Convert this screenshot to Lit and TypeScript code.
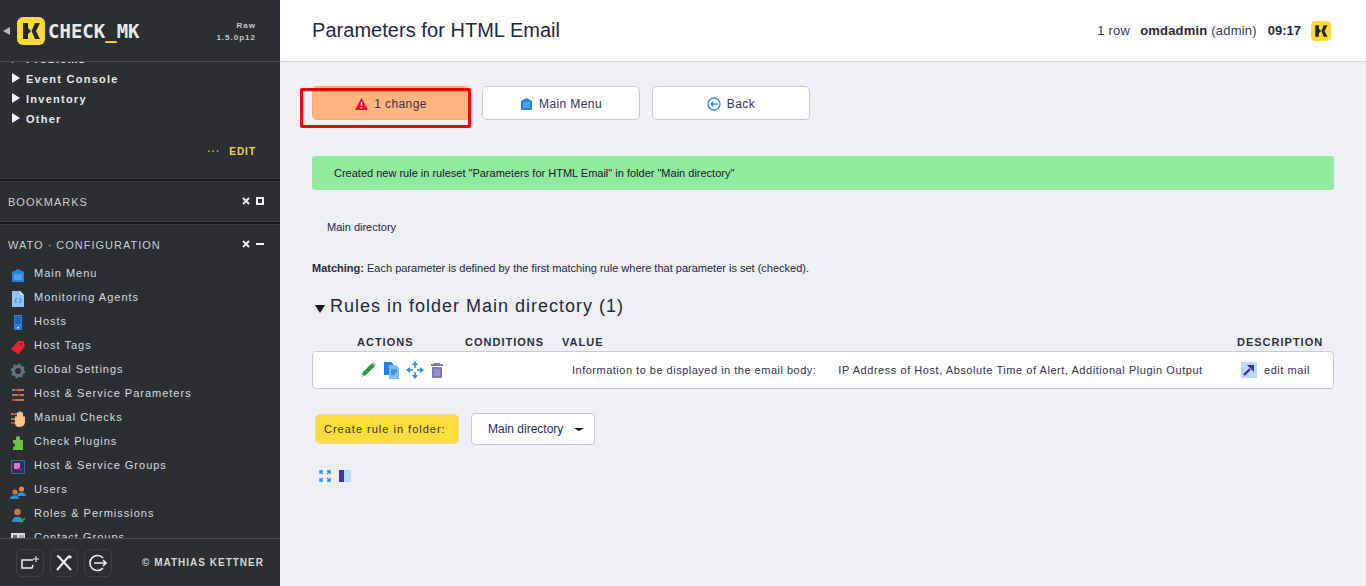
import { LitElement, html, css, svg } from "lit";
import { customElement } from "lit/decorators.js";

const logo = (size: number) => html`<svg width=${size} height=${size} viewBox="0 0 28 28">
  <rect width="28" height="28" rx="6" fill="#ffd93b"></rect>
  <path d="M6 6h5v5l3 3-3 3v5H6zM23 6h-5l-3.500 8 3.500 8h5l-4-8z" fill="#23272a"></path>
</svg>`;

const homeIcon = html`<svg width="13" height="13" viewBox="0 0 13 13">
  <path d="M1 4 6.500 1 12 4v8a1 1 0 0 1-1 1H2a1 1 0 0 1-1-1z" fill="#2083e8"></path>
  <path d="M3 6h7M3 8h7M3 10h7" stroke="#9cc9f5" stroke-width=".8"></path>
</svg>`;

const navIcons: Record<string, unknown> = {
  menu: svg`<path d="M2 5 8 2l6 3v9a1 1 0 0 1-1 1H3a1 1 0 0 1-1-1z" fill="#2083e8"/><path d="M4 8h8M4 10h8M4 12h8" stroke="#9cc9f5" stroke-width=".8"/>`,
  agents: svg`<path d="M2 0h8l4 4v12H2z" fill="#8fc4f4"/><path d="M10 0v4h4z" fill="#d8ebfb"/><path d="M6.500 7 5 9.500 6.500 12M9.500 7 11 9.500 9.500 12" stroke="#2083e8" fill="none"/>`,
  hosts: svg`<rect x="4" y="0" width="8" height="15" fill="#2083e8"/><path d="M5 2h6M5 4h6M5 6h6M5 8h6" stroke="#1a4a78"/><rect x="7" y="12" width="2" height="1.500" fill="#cfe6fb"/>`,
  tags: svg`<path d="M8 2h5a1 1 0 0 1 1 1l1 4-6 8a1 1 0 0 1-1 0L2 11a1 1 0 0 1 0-2z" fill="#e8232e"/><circle cx="11" cy="5" r="1" fill="#a5121c"/>`,
  settings: svg`<circle cx="8" cy="8" r="4.600" fill="none" stroke="#5b7583" stroke-width="3.200"/><circle cx="8" cy="8" r="6.600" fill="none" stroke="#5b7583" stroke-width="1.600" stroke-dasharray="2.400 2.800"/>`,
  params: svg`<path d="M2 3h12M2 8h12M2 13h12" stroke="#d9d9d9" stroke-width="1.200"/><path d="M7 3h7M10 8h4M5 13h9" stroke="#ef6a2e" stroke-width="1.200"/><circle cx="6" cy="3" r="1.200" fill="#e8232e"/><circle cx="9" cy="8" r="1.200" fill="#e8232e"/><circle cx="4" cy="13" r="1.200" fill="#e8232e"/>`,
  manual: svg`<path d="M1 3h6M1 8h5M1 12h5" stroke="#d9d9d9" stroke-width="1.200"/><circle cx="4" cy="3" r="1.200" fill="#e8232e"/><circle cx="3" cy="12" r="1.200" fill="#e8232e"/><path d="M5 6c0-1 2-1 2 0V2c0-1 2-1 2 0V1c0-1 2-1 2 0v1c0-1 2-1 2 0v4c0-1 2-1 2 0v5a5 5 0 0 1-5 5H9a4 4 0 0 1-4-4z" fill="#f6c48c"/>`,
  plugins: svg`<path d="M3 5h3V3a2 2 0 0 1 4 0v2h3v10H3v-3a2 2 0 0 0 0-4z" fill="#6cc04a"/>`,
  groups: svg`<rect x="1.500" y="1.500" width="13" height="13" fill="#2f3540" stroke="#2a6cb0"/><rect x="4" y="4" width="6" height="6" fill="#d27bd2"/><path d="M7 11l3-3 3 3z" fill="#a0169e"/>`,
  users: svg`<circle cx="5" cy="9" r="2.600" fill="#c77b36"/><path d="M0 16c0-5 9-5 9 0z" fill="#2b8fe8"/><circle cx="11.500" cy="6" r="2.600" fill="#e08c3e"/><path d="M7 13c0-5 9-5 9 0z" fill="#2b8fe8"/>`,
  roles: svg`<circle cx="7.500" cy="5" r="3.300" fill="#c77b36"/><path d="M2 15c0-7 11-7 11 0z" fill="#2b8fe8"/><path d="m9 13 2 2 4-4" stroke="#37a83a" stroke-width="1.600" fill="none"/>`,
  contacts: svg`<rect x="1" y="2" width="14" height="11" fill="#d9d9d9"/><rect x="3" y="4" width="4" height="4" fill="#666"/><path d="M9 5h5M9 7h5" stroke="#777"/>`,
};

const nav: [string, string][] = [
  ["menu", "Main Menu"],
  ["agents", "Monitoring Agents"],
  ["hosts", "Hosts"],
  ["tags", "Host Tags"],
  ["settings", "Global Settings"],
  ["params", "Host & Service Parameters"],
  ["manual", "Manual Checks"],
  ["plugins", "Check Plugins"],
  ["groups", "Host & Service Groups"],
  ["users", "Users"],
  ["roles", "Roles & Permissions"],
  ["contacts", "Contact Groups"],
];

@customElement("app-root")
export class AppRoot extends LitElement {
  static styles = css`
    :host {
      display: flex;
      height: 586px;
      overflow: hidden;
      font-family: "Liberation Sans", Arial, sans-serif;
      background: #eff0f3;
      color: #2e2e4a;
      position: relative;
    }
    .sidebar {
      width: 280px;
      flex: none;
      display: flex;
      flex-direction: column;
      background: #2b2f31;
      color: #dfe4e8;
    }
    .brand {
      flex: none;
      border-bottom: 1px solid #4a4e50;
      display: flex;
      align-items: center;
      box-sizing: border-box;
      padding: 0 0 0 3px;
      height: 62px;
    }
    .collapse {
      width: 0;
      height: 0;
      border: 4px solid transparent;
      border-left: 0;
      border-right: 7px solid #b9bcbe;
      margin-right: 7px;
    }
    .wordmark {
      font-family: "DejaVu Sans Mono", monospace;
      font-weight: 700;
      font-size: 19px;
      color: #e8eaea;
      margin-left: 3px;
    }
    .wordmark span {
      color: #ffd93b;
    }
    .version {
      margin-left: auto;
      margin-right: 24px;
      margin-top: 2px;
      text-align: right;
      font-size: 8px;
      line-height: 12px;
      font-weight: 700;
      letter-spacing: 1px;
      color: #c4c9cc;
    }
    .scroll {
      flex: 1;
      overflow: hidden;
      min-height: 0;
    }
    .tree {
      height: 88px;
      box-sizing: border-box;
      margin-top: -13px;
    }
    .tree-row {
      height: 20px;
      display: flex;
      align-items: center;
      padding-left: 12px;
      font-size: 11px;
      font-weight: 700;
      letter-spacing: 1.25px;
      color: #e6ebef;
    }
    .tree-row i {
      width: 0;
      height: 0;
      border: 5px solid transparent;
      border-right: 0;
      border-left: 8px solid #f4f4f4;
      margin: -3px 6px 0 0;
    }
    .edit-row {
      height: 28px;
      margin-bottom: 13px;
      display: flex;
      justify-content: flex-end;
      align-items: center;
      gap: 9px;
      padding-right: 24px;
      font-size: 10px;
      font-weight: 700;
      letter-spacing: 1px;
      color: #f5d93c;
    }
    .edit-row b {
      color: #d9a83a;
      letter-spacing: 1px;
    }
    .divider {
      height: 2px;
      background: #161819;
      border-top: 1px solid #3a3e40;
      border-bottom: 1px solid #3a3e40;
    }
    .snap-head {
      display: flex;
      align-items: center;
      justify-content: space-between;
      padding: 0 16px 0 8px;
      font-size: 11px;
      letter-spacing: 1px;
      color: #c9ced2;
    }
    .bookmarks {
      height: 39px;
    }
    .wato-head {
      height: 40px;
      margin-bottom: -4px;
    }
    .snap-tools {
      display: flex;
      align-items: center;
      gap: 6px;
      margin-top: -2px;
    }
    .nav-row {
      height: 24px;
      display: flex;
      align-items: center;
      padding-left: 10px;
      font-size: 11px;
      letter-spacing: 1px;
      color: #d7dce0;
    }
    .nav-row svg {
      margin: 3px 8px 0 0;
      flex: none;
    }
    .nav-row span {
      margin-top: -1px;
    }
    .foot {
      height: 48px;
      flex: none;
      border-top: 1px solid #4a4e50;
      display: flex;
      align-items: center;
      padding: 0 16px;
      gap: 6px;
      box-sizing: border-box;
    }
    .foot-btn {
      width: 28px;
      height: 28px;
      border: 1px solid #3d4143;
      border-radius: 6px;
      box-sizing: border-box;
      display: flex;
      align-items: center;
      justify-content: center;
    }
    .copy {
      margin-left: auto;
      font-size: 10px;
      font-weight: 700;
      letter-spacing: 1px;
      color: #d4d8db;
    }
    .main {
      flex: 1;
      min-width: 0;
      display: flex;
      flex-direction: column;
    }
    .top {
      height: 62px;
      box-sizing: border-box;
      background: #fff;
      border-bottom: 1px solid #d5d7dc;
      display: flex;
      align-items: center;
      padding: 0 35px 0 32px;
    }
    h1 {
      font-size: 20px;
      font-weight: 400;
      margin: 0;
      letter-spacing: 0.04px;
      color: #26263f;
    }
    .status {
      margin-left: auto;
      display: flex;
      align-items: center;
      font-size: 13px;
      letter-spacing: 0.2px;
      color: #3a3a5c;
    }
    .status b {
      color: #26263f;
    }
    .status .user {
      margin-left: 10px;
    }
    .status .time {
      margin: 0 10px 0 11px;
      letter-spacing: 0;
    }
    .content {
      padding: 24px 32px 0;
      font-size: 11px;
    }
    .buttons {
      display: flex;
      gap: 12px;
    }
    .btn {
      width: 158px;
      height: 34px;
      padding-top: 1px;
      box-sizing: border-box;
      background: #fff;
      border: 1px solid #c9cbdb;
      border-radius: 5px;
      display: flex;
      align-items: center;
      justify-content: center;
      gap: 6px;
      font-size: 12px;
      letter-spacing: 0.4px;
      color: #33334f;
    }
    .btn.warn {
      background: #ffb57d;
      border-color: #f7ab72;
    }
    .notice {
      margin-top: 36px;
      height: 34px;
      background: #90eb9e;
      border-radius: 3px;
      display: flex;
      align-items: center;
      padding-left: 22px;
      color: #16162a;
    }
    .crumb {
      margin: 30px 0 0 15px;
      line-height: 14px;
      color: #26263f;
    }
    .matching {
      margin-top: 27px;
      line-height: 14px;
      color: #26263f;
    }
    h2 {
      margin: 19px 0 0;
      font-size: 18px;
      line-height: 24px;
      font-weight: 400;
      letter-spacing: 1px;
      color: #26263f;
      display: flex;
      align-items: center;
    }
    h2 i {
      width: 0;
      height: 0;
      border: 5px solid transparent;
      border-bottom: 0;
      border-top: 8px solid #111;
      margin: 5px 5px 0 3px;
    }
    .rules {
      margin-top: 14px;
      font-size: 11px;
      letter-spacing: 0.55px;
    }
    .rule-grid {
      display: grid;
      grid-template-columns: 153px 97px 675px 1fr;
      align-items: center;
    }
    .heads {
      height: 19px;
      font-weight: 700;
      letter-spacing: 1px;
      color: #2e2e40;
    }
    .heads div:first-child {
      padding-left: 45px;
    }
    .row {
      height: 38px;
      box-sizing: border-box;
      background: #fff;
      border: 1px solid #c9cbdb;
      border-radius: 4px;
      color: #33334f;
    }
    .row-icons {
      display: flex;
      align-items: center;
      gap: 6px;
      padding-left: 46px;
    }
    .value {
      display: flex;
      padding-left: 9px;
      gap: 22px;
      white-space: nowrap;
    }
    .value span:first-child {
      letter-spacing: 0.5px;
    }
    .desc {
      display: flex;
      align-items: center;
      gap: 7px;
      padding-left: 3px;
      white-space: nowrap;
    }
    .create {
      margin-top: 24px;
      display: flex;
      align-items: center;
      gap: 12px;
      padding-left: 3px;
    }
    .create-btn {
      width: 144px;
      height: 30px;
      box-sizing: border-box;
      background: #ffdc3e;
      border: 1px solid #e6e0a0;
      border-radius: 5px;
      display: flex;
      align-items: center;
      padding-left: 8px;
      font-size: 11px;
      letter-spacing: 1px;
      color: #33332f;
    }
    .select {
      width: 124px;
      height: 32px;
      box-sizing: border-box;
      background: #fff;
      border: 1px solid #c9cbdb;
      border-radius: 4px;
      display: flex;
      align-items: center;
      padding-left: 16px;
      font-size: 12px;
      color: #2e2e5a;
    }
    .select i {
      width: 0;
      height: 0;
      border: 5px solid transparent;
      border-bottom: 0;
      border-top: 3px solid #111;
      margin-left: 11px;
    }
    .tools {
      margin-top: 25px;
      padding-left: 7px;
      display: flex;
      gap: 8px;
    }
    .highlight {
      position: absolute;
      left: 300px;
      top: 88px;
      width: 171px;
      height: 40px;
      box-sizing: border-box;
      border: 3px solid #f00;
      border-radius: 2px;
      pointer-events: none;
    }
  `;

  render() {
    const close = html`<svg width="8" height="8" viewBox="0 0 8 8"><path d="m1 1 6 6M7 1 1 7" stroke="#f2f2f2" stroke-width="2"></path></svg>`;
    return html`
      <aside class="sidebar">
        <div class="brand">
          <i class="collapse"></i>
          ${logo(28)}
          <div class="wordmark">CHECK<span>_</span>MK</div>
          <div class="version">Raw<br />1.5.0p12</div>
        </div>
        <div class="scroll">
          <div class="tree">
            ${["Problems", "Event Console", "Inventory", "Other"].map(
              (t) => html`<div class="tree-row"><i></i>${t}</div>`
            )}
          </div>
          <div class="edit-row"><b>···</b>EDIT</div>
          <div class="divider"></div>
          <div class="snap-head bookmarks">
            BOOKMARKS
            <div class="snap-tools">
              ${close}
              <svg width="8" height="8" viewBox="0 0 8 8"><rect x="1" y="1" width="6" height="6" fill="none" stroke="#f2f2f2" stroke-width="2"></rect></svg>
            </div>
          </div>
          <div class="divider"></div>
          <div class="snap-head wato-head">
            WATO · CONFIGURATION
            <div class="snap-tools">
              ${close}
              <svg width="8" height="8" viewBox="0 0 8 8"><rect y="3" width="8" height="2" fill="#f2f2f2"></rect></svg>
            </div>
          </div>
          ${nav.map(
            ([icon, label]) => html`<div class="nav-row">
              <svg width="16" height="16" viewBox="0 0 16 16">${navIcons[icon]}</svg>
              <span>${label}</span>
            </div>`
          )}
        </div>
        <div class="foot">
          <div class="foot-btn">
            <svg width="20" height="18" viewBox="0 0 20 18" fill="none" stroke="#f0f0f0" stroke-width="1.500"><path d="M13 6H2v8h10l1-3"></path><path d="M16 2v6M13 5h6" stroke-width="1"></path></svg>
          </div>
          <div class="foot-btn">
            <svg width="18" height="18" viewBox="0 0 18 18" fill="none" stroke="#f0f0f0" stroke-width="2"><path d="m4 3 12 13M14 2 2 16"></path><path d="M2 1l3 1-1 2-2-1zM13 3l2-2 2 2-2 2z" fill="#f0f0f0" stroke="none"></path></svg>
          </div>
          <div class="foot-btn">
            <svg width="20" height="20" viewBox="0 0 20 20" fill="none" stroke="#f0f0f0" stroke-width="1.600"><path d="M15 5a7.500 7.500 0 1 0 0 10"></path><path d="M6 10h12M15 7l3 3-3 3"></path></svg>
          </div>
          <div class="copy">© MATHIAS KETTNER</div>
        </div>
      </aside>
      <main class="main">
        <header class="top">
          <h1>Parameters for HTML Email</h1>
          <div class="status">
            1 row
            <b class="user">omdadmin</b>&nbsp;(admin)
            <b class="time">09:17</b>
            ${logo(20)}
          </div>
        </header>
        <section class="content">
          <div class="buttons">
            <div class="btn warn">
              <svg width="13" height="12" viewBox="0 0 13 12"><path d="M6.500 0 13 12H0z" fill="#f0053d"></path><path d="M6.500 4v4M6.500 9v1.500" stroke="#fff" stroke-width="1.400"></path></svg>
              1 change
            </div>
            <div class="btn">${homeIcon} Main Menu</div>
            <div class="btn">
              <svg width="14" height="14" viewBox="0 0 14 14" fill="none" stroke="#2b8fe8"><circle cx="7" cy="7" r="6" stroke-width="1.300"></circle><path d="M11 7H4M6.500 4.500 4 7l2.500 2.500" stroke-width="1.300"></path></svg>
              Back
            </div>
          </div>
          <div class="notice">Created new rule in ruleset "Parameters for HTML Email" in folder "Main directory"</div>
          <div class="crumb">Main directory</div>
          <div class="matching"><b>Matching:</b> Each parameter is defined by the first matching rule where that parameter is set (checked).</div>
          <h2><i></i>Rules in folder Main directory (1)</h2>
          <div class="rules">
            <div class="rule-grid heads">
              <div>ACTIONS</div>
              <div>CONDITIONS</div>
              <div>VALUE</div>
              <div>DESCRIPTION</div>
            </div>
            <div class="rule-grid row">
              <div class="row-icons">
                <svg width="18" height="18" viewBox="0 0 18 18"><path d="m2 16 2-5L13 2l3 3-9 9z" fill="#1f9d45"></path><path d="m13 2 1-1 3 3-1 1z" fill="#ef8f8f"></path><path d="m2 16 1-3 2 2z" fill="#e9c9a0"></path></svg>
                <svg width="17" height="18" viewBox="0 0 17 18"><path d="M1 1h7l2 2v11H1z" fill="#2083e8"></path><path d="M6 4h7l3 3v11H6z" fill="#7cbdf5"></path><path d="M8 9h6M8 11h6M8 13h4" stroke="#1a66b8"></path></svg>
                <svg width="18" height="18" viewBox="0 0 18 18" fill="#2b8fe8"><path d="M9 0 6 4h6zM9 18l-3-4h6zM0 9l4-3v6zM18 9l-4-3v6z"></path><path d="M9 4v3M9 11v3M4 9h3M11 9h3" stroke="#2b8fe8" stroke-width="1.500"></path></svg>
                <svg width="14" height="16" viewBox="0 0 14 16"><path d="M4 1h6v1h3v2H1V2h3z" fill="#7e78b8"></path><path d="M2 5h10v10a1 1 0 0 1-1 1H3a1 1 0 0 1-1-1z" fill="#7e78b8"></path><path d="M5 7v7M7 7v7M9 7v7" stroke="#b0acd8"></path></svg>
              </div>
              <div></div>
              <div class="value">
                <span>Information to be displayed in the email body:</span>
                <span>IP Address of Host, Absolute Time of Alert, Additional Plugin Output</span>
              </div>
              <div class="desc">
                <svg width="16" height="16" viewBox="0 0 16 16"><rect width="16" height="16" fill="#b5dafb"></rect><path d="M3 13 9 7" stroke="#3f2ea8" stroke-width="2.400"></path><path d="M6 3h7v7z" fill="#3f2ea8"></path></svg>
                edit mail
              </div>
            </div>
          </div>
          <div class="create">
            <div class="create-btn">Create rule in folder:</div>
            <div class="select">Main directory<i></i></div>
          </div>
          <div class="tools">
            <svg width="12" height="12" viewBox="0 0 12 12" fill="none" stroke="#2b8fe8" stroke-width="1.400"><path d="M1 4V1h3M8 1h3v3M1 8v3h3M11 8v3H8M1 1l3 3M11 1 8 4M1 11l3-3M11 11 8 8"></path></svg>
            <svg width="12" height="12" viewBox="0 0 12 12"><rect width="12" height="12" fill="#b5dafb"></rect><rect width="5" height="12" fill="#4a35ab"></rect></svg>
          </div>
        </section>
      </main>
      <div class="highlight"></div>
    `;
  }
}
